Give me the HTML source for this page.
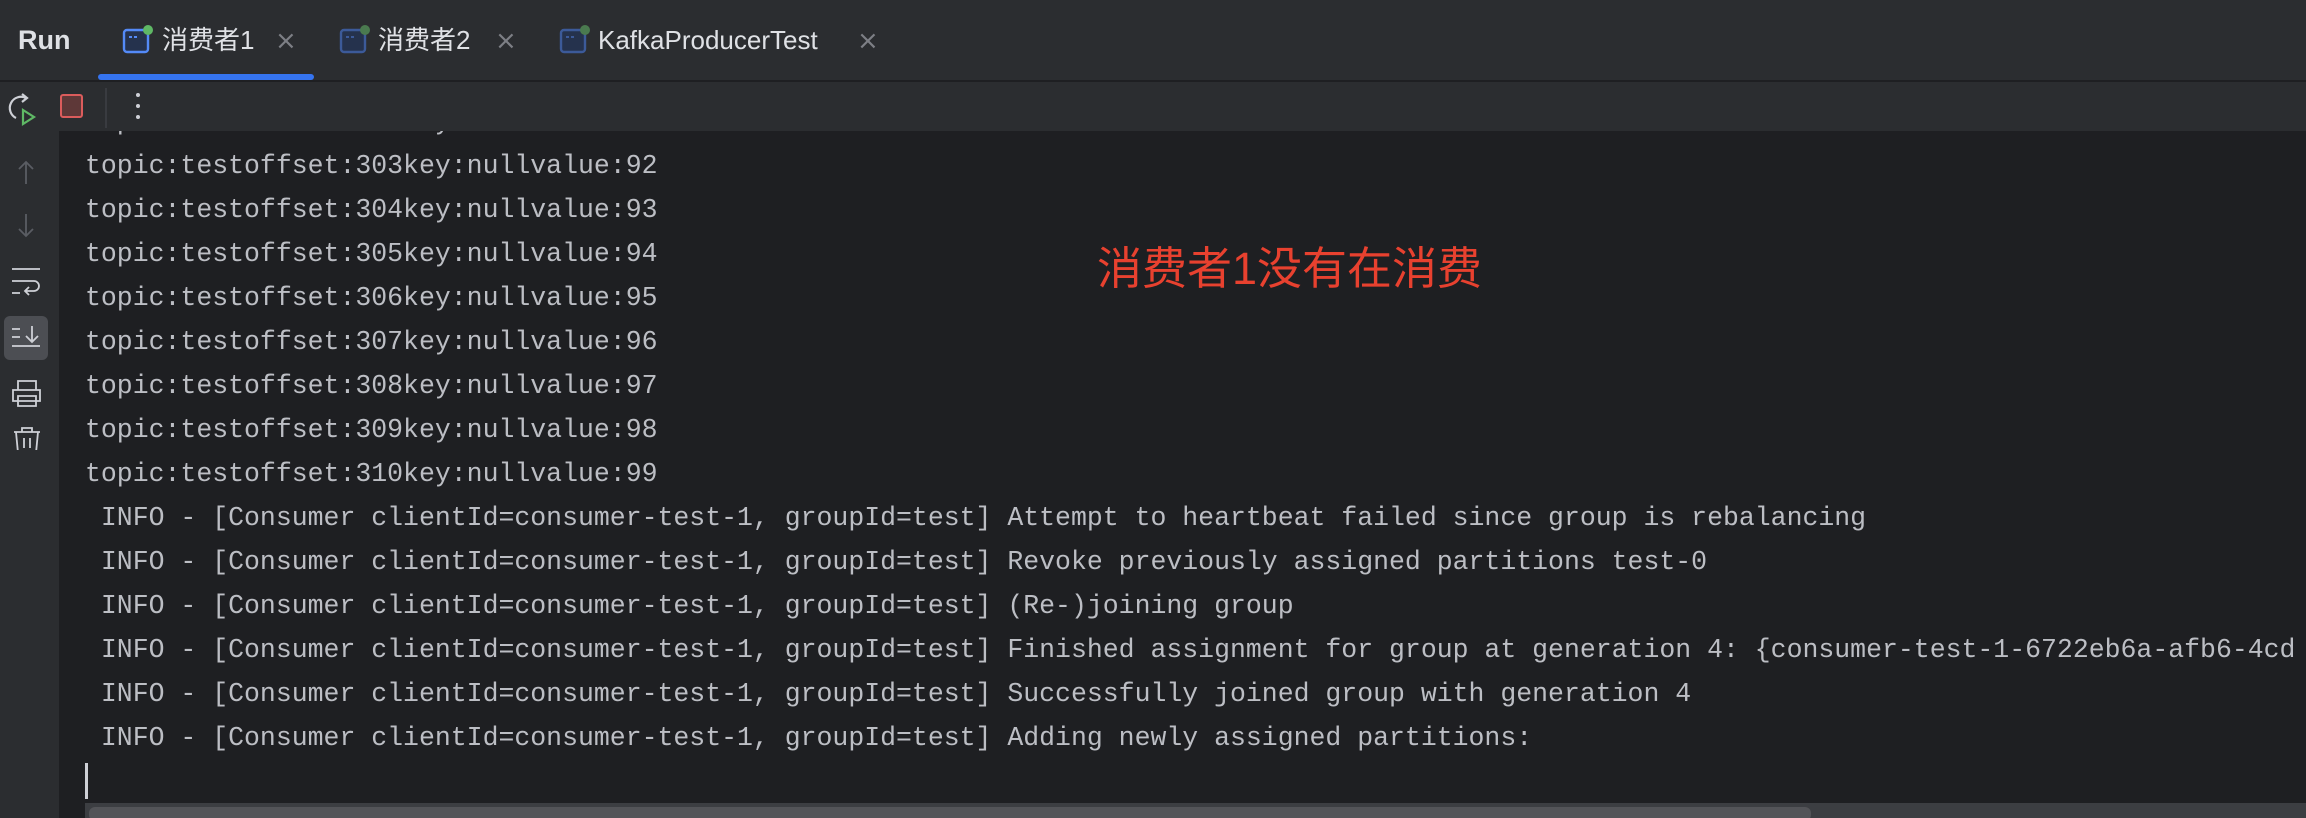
<!DOCTYPE html>
<html><head><meta charset="utf-8"><style>
*{margin:0;padding:0;box-sizing:border-box}
body{width:2306px;height:818px;background:#2b2d30;overflow:hidden;position:relative;font-family:"Liberation Sans","Noto Sans CJK SC",sans-serif;color:#dfe1e5}
.abs{position:absolute}
.tab{position:absolute;top:22px;font-size:26px;line-height:36px;color:#dfe1e5;white-space:nowrap}
.x{position:absolute;top:26px;font-size:26px;color:#7d7f85;font-family:"DejaVu Sans",sans-serif;line-height:30px}
#console{position:absolute;left:59px;top:131px;width:2247px;height:687px;background:#1e1f22;overflow:hidden}
.ln{position:absolute;left:26px;font-family:"Liberation Mono",monospace;font-size:26.5px;line-height:44px;color:#bcbec4;white-space:pre}
</style></head><body>
<div class="abs" style="left:18px;top:22px;font-size:27px;font-weight:bold;line-height:36px">Run</div>

<svg class="abs" style="left:122px;top:24px" width="32" height="32" viewBox="0 0 32 32"><rect x="2" y="6" width="24" height="22" rx="3" fill="#25324d" stroke="#548af7" stroke-width="2.4"/><rect x="7" y="12" width="3" height="2" fill="#548af7"/><rect x="12" y="12" width="3" height="2" fill="#548af7"/><circle cx="26" cy="6" r="5" fill="#5fb865"/></svg>
<div class="tab" style="left:162px">消费者1</div><div class="x" style="left:275px">×</div>

<svg class="abs" style="left:339px;top:24px" width="32" height="32" viewBox="0 0 32 32"><rect x="2" y="6" width="24" height="22" rx="3" fill="#25324d" stroke="#3c5a99" stroke-width="2.4"/><rect x="7" y="12" width="3" height="2" fill="#3c5a99"/><rect x="12" y="12" width="3" height="2" fill="#3c5a99"/><circle cx="26" cy="6" r="5" fill="#4a7a4f"/></svg>
<div class="tab" style="left:378px">消费者2</div><div class="x" style="left:495px">×</div>

<svg class="abs" style="left:559px;top:24px" width="32" height="32" viewBox="0 0 32 32"><rect x="2" y="6" width="24" height="22" rx="3" fill="#25324d" stroke="#3c5a99" stroke-width="2.4"/><rect x="7" y="12" width="3" height="2" fill="#3c5a99"/><rect x="12" y="12" width="3" height="2" fill="#3c5a99"/><circle cx="26" cy="6" r="5" fill="#4a7a4f"/></svg>
<div class="tab" style="left:598px">KafkaProducerTest</div><div class="x" style="left:857px">×</div>

<div class="abs" style="left:98px;top:74px;width:216px;height:6px;background:#3574f0;border-radius:3px"></div>
<div class="abs" style="left:0;top:80px;width:2306px;height:2px;background:#1e1f22"></div>

<svg class="abs" style="left:4px;top:90px" width="36" height="36" viewBox="0 0 36 36"><path d="M22 8 A11 11 0 1 0 12 28" fill="none" stroke="#ced0d6" stroke-width="2.2"/><path d="M18 4 L23 8 L18 12" fill="none" stroke="#ced0d6" stroke-width="2.2"/><path d="M19 20 L30 27 L19 34 Z" fill="none" stroke="#5fb865" stroke-width="2.2"/></svg>
<div class="abs" style="left:60px;top:94px;width:23px;height:24px;background:#5e3838;border:2px solid #db5c5c;border-radius:3px"></div>
<div class="abs" style="left:105px;top:88px;width:2px;height:40px;background:#393b40"></div>
<div class="abs" style="left:136px;top:93px;width:4px;height:4px;border-radius:2px;background:#ced0d6"></div>
<div class="abs" style="left:136px;top:104px;width:4px;height:4px;border-radius:2px;background:#ced0d6"></div>
<div class="abs" style="left:136px;top:115px;width:4px;height:4px;border-radius:2px;background:#ced0d6"></div>

<svg class="abs" style="left:0;top:150px" width="59" height="300" viewBox="0 0 59 300">
<path d="M26 12 V34 M19 19 L26 12 L33 19" fill="none" stroke="#5a5d63" stroke-width="1.8"/>
<path d="M26 64 V86 M19 79 L26 86 L33 79" fill="none" stroke="#5a5d63" stroke-width="1.8"/>
<path d="M12 119 H40 M12 131 H34 a5 5 0 0 1 0 10 H26 M29 137 L25 141 L29 145 M12 143 H20" fill="none" stroke="#ced0d6" stroke-width="1.8"/>
<rect x="4" y="166" width="44" height="44" rx="6" fill="#4c4e53"/>
<path d="M12 179 H20 M12 187 H20 M12 196 H40 M32 176 V192 M26 186 L32 192 L38 186" fill="none" stroke="#ced0d6" stroke-width="1.8"/>
<path d="M18 240 V231 H36 V240 M13 240 H40 V251 H13 Z M18 246 V256 H36 V246 Z" fill="none" stroke="#ced0d6" stroke-width="1.8"/>
<path d="M14 282 H40 M22 282 V278 H32 V282 M16 282 L18 303 H36 L38 282 M24 288 V298 M30 288 V298" fill="none" stroke="#ced0d6" stroke-width="1.8"/>
</svg>

<div id="console">
<div class="ln" style="top:-31px">topic:testoffset:302key:nullvalue:91</div>
<div class="ln" style="top:13px">topic:testoffset:303key:nullvalue:92</div>
<div class="ln" style="top:57px">topic:testoffset:304key:nullvalue:93</div>
<div class="ln" style="top:101px">topic:testoffset:305key:nullvalue:94</div>
<div class="ln" style="top:145px">topic:testoffset:306key:nullvalue:95</div>
<div class="ln" style="top:189px">topic:testoffset:307key:nullvalue:96</div>
<div class="ln" style="top:233px">topic:testoffset:308key:nullvalue:97</div>
<div class="ln" style="top:277px">topic:testoffset:309key:nullvalue:98</div>
<div class="ln" style="top:321px">topic:testoffset:310key:nullvalue:99</div>
<div class="ln" style="top:365px"> INFO - [Consumer clientId=consumer-test-1, groupId=test] Attempt to heartbeat failed since group is rebalancing</div>
<div class="ln" style="top:409px"> INFO - [Consumer clientId=consumer-test-1, groupId=test] Revoke previously assigned partitions test-0</div>
<div class="ln" style="top:453px"> INFO - [Consumer clientId=consumer-test-1, groupId=test] (Re-)joining group</div>
<div class="ln" style="top:497px"> INFO - [Consumer clientId=consumer-test-1, groupId=test] Finished assignment for group at generation 4: {consumer-test-1-6722eb6a-afb6-4cd</div>
<div class="ln" style="top:541px"> INFO - [Consumer clientId=consumer-test-1, groupId=test] Successfully joined group with generation 4</div>
<div class="ln" style="top:585px"> INFO - [Consumer clientId=consumer-test-1, groupId=test] Adding newly assigned partitions:</div>
<div class="abs" style="left:26px;top:632px;width:3px;height:36px;background:#ced0d6"></div>
<div class="abs" style="left:26px;top:672px;width:2221px;height:15px;background:#3c3e42"></div>
<div class="abs" style="left:30px;top:676px;width:1722px;height:14px;background:#535458;border-radius:6px"></div>
<div class="abs" style="left:1038px;top:110px;font-size:45px;line-height:56px;color:#e8412f;font-family:'Liberation Sans','Noto Sans CJK SC',sans-serif">消费者1没有在消费</div>
</div>
</body></html>
